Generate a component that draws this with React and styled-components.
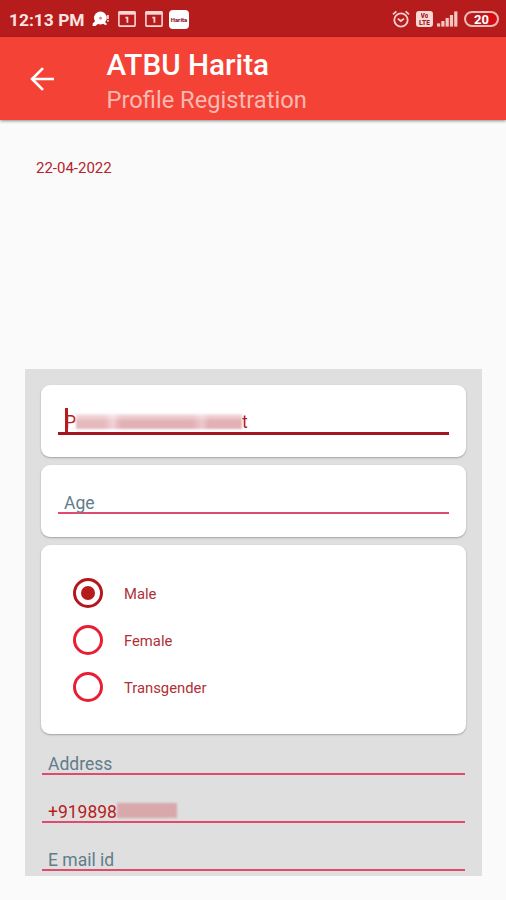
import { useState } from 'react';
import styled, { createGlobalStyle } from 'styled-components';

const GlobalStyle = createGlobalStyle`
  * {
    box-sizing: border-box;
  }
  body {
    margin: 0;
    background: #fafafa;
    font-family: Roboto, 'Liberation Sans', sans-serif;
  }
`;

const AlarmIcon = () => (
  <svg width="18" height="18" viewBox="0 0 18 18" fill="none" stroke="#f6cfcb" strokeWidth="1.8">
    <circle cx="9" cy="10" r="6.7" />
    <path d="M1 4.4L4.4 1.4M17 4.4L13.6 1.4" />
    <path d="M5.8 8.6L8.8 11L12 8.6" />
  </svg>
);

const SignalIcon = () => (
  <svg width="21" height="16" viewBox="0 0 21 16" fill="#f3c6c2">
    <rect x="0" y="12.4" width="3.2" height="3.2" />
    <rect x="4.3" y="10" width="3.2" height="5.6" />
    <rect x="8.6" y="7" width="3.2" height="8.6" />
    <rect x="12.9" y="4" width="3.2" height="11.6" />
    <rect x="17.2" y="0.4" width="3.2" height="15.2" />
  </svg>
);

const CallIcon = () => (
  <svg width="18" height="16" viewBox="0 0 18 16" fill="#fff">
    <circle cx="8.4" cy="7" r="6.4" />
    <path d="M4 9.5L0.6 12.4V15H3.4L7 12Z" />
    <path d="M12 10l3.2 3.2-2 .8-3-2z" />
    <rect x="15.2" y="4" width="1.5" height="4" />
    <rect x="15.2" y="9" width="1.5" height="1.6" />
    <circle cx="8.6" cy="7.2" r="1.4" fill="#d9837f" />
  </svg>
);

const CalendarIcon = () => (
  <svg width="18" height="16" viewBox="0 0 18 16" fill="none">
    <rect x="0.9" y="0.9" width="16.2" height="14.2" rx="0.8" stroke="#f8d5d2" strokeWidth="1.6" />
    <rect x="0.5" y="0.5" width="17" height="3.2" fill="#f8d5d2" />
    <path d="M7.4 6.6H9.4V11.8" stroke="#f8d5d2" strokeWidth="1.8" />
  </svg>
);

const BackIcon = () => (
  <svg width="24" height="24" viewBox="0 0 24 24" fill="none" stroke="#fff" strokeWidth="2.7">
    <path d="M24 12H2.2M13 1.1L2.1 12L13 22.9" />
  </svg>
);

const StatusBar = styled.div`
  display: flex;
  align-items: center;
  justify-content: space-between;
  height: 37px;
  padding: 1px 7px 0 9px;
  background: #b71c1c;
`;

const StatusGroup = styled.div`
  display: flex;
  align-items: center;
  gap: ${(props) => props.$gap}px;
`;

const Clock = styled.span`
  width: 75px;
  margin-right: -1px;
  padding-top: 1px;
  color: #fbe3e1;
  font-size: 17.4px;
  font-weight: 700;
  white-space: nowrap;
`;

const AppBadge = styled.span`
  display: flex;
  align-items: center;
  justify-content: center;
  width: 20px;
  height: 19px;
  margin-left: -2px;
  border-radius: 4px;
  background: #fff;
  color: #8d2430;
  font-size: 6px;
  font-weight: 900;
`;

const VolteBadge = styled.span`
  display: flex;
  flex-direction: column;
  align-items: center;
  justify-content: center;
  gap: 1px;
  width: 17px;
  height: 16px;
  margin-left: 2px;
  border-radius: 3px;
  background: #f8d9d6;
  color: #a81d1d;
  font-size: 6.6px;
  font-weight: 900;
  line-height: 6px;
`;

const VolteLine = styled.span`
  display: block;
  height: 6px;
  overflow: hidden;
`;

const Battery = styled.span`
  width: 35px;
  height: 16px;
  margin-left: 2px;
  border: 2px solid #f0b9b5;
  border-radius: 8px;
  background: linear-gradient(90deg, #b71c1c 64%, #d50b12 64%);
  color: #fff;
  font-size: 13px;
  font-weight: 700;
  line-height: 13px;
  text-align: center;
`;

const Toolbar = styled.header`
  display: flex;
  align-items: center;
  gap: 52.5px;
  height: 83px;
  padding-left: 30px;
  background: #f44336;
  box-shadow: 0 1px 3px rgba(0, 0, 0, 0.45);
`;

const Titles = styled.div`
  padding-top: 7px;
`;

const Title = styled.h1`
  margin: 0;
  color: #fff;
  font-size: 29.7px;
  font-weight: 500;
  line-height: 36px;
`;

const Subtitle = styled.div`
  color: #fbb9b2;
  font-size: 23.7px;
  line-height: 35px;
`;

const DateText = styled.div`
  padding: 40px 0 0 36px;
  height: 249px;
  color: #b3262b;
  font-size: 15px;
  line-height: 17px;
`;

const Panel = styled.main`
  display: flex;
  flex-direction: column;
  gap: 8px;
  width: 457px;
  height: 507px;
  margin-left: 25px;
  padding: 16px 16px 0;
  background: #dfdfdf;
`;

const Card = styled.section`
  height: ${(props) => props.$height}px;
  padding: ${(props) => props.$padding};
  border-radius: 9px;
  background: #fff;
  box-shadow: 0 1px 2px rgba(0, 0, 0, 0.28);
`;

const Field = styled.div`
  display: flex;
  align-items: flex-end;
  height: ${(props) => props.$height || 34}px;
  padding: 0 6px;
  border-bottom: ${(props) => (props.$focused ? '3px solid #a31521' : '2px solid #e04a6c')};
  color: ${(props) => (props.$filled ? '#b71c1c' : '#607d8b')};
  font-size: 17.5px;
  line-height: ${(props) => (props.$focused ? 20 : 18)}px;
`;

const Caret = styled.span`
  width: 3px;
  height: 24px;
  margin: 0 -3px 0 1px;
  background: #b71c1c;
`;

const Redacted = styled.span`
  width: ${(props) => props.$width}px;
  height: 15px;
  margin-bottom: ${(props) => props.$lift || 3}px;
  background: ${(props) => props.$fill};
  filter: blur(1px);
`;

const PlainFields = styled.div`
  padding: 0 1px;
`;

const RadioList = styled.div`
  display: flex;
  flex-direction: column;
  gap: 17.2px;
`;

const RadioRow = styled.label`
  display: flex;
  align-items: center;
  gap: 21px;
  height: 30px;
  color: #b03036;
  font-size: 14.8px;
  line-height: 18px;
  cursor: pointer;
`;

const RadioLabel = styled.span`
  padding-top: 2px;
`;

const RadioCircle = styled.span`
  display: flex;
  align-items: center;
  justify-content: center;
  width: 30px;
  height: 30px;
  border: 3px solid ${(props) => (props.$checked ? '#b3161c' : '#e81e35')};
  border-radius: 50%;

  &::after {
    content: '';
    width: 14px;
    height: 14px;
    border-radius: 50%;
    background: ${(props) => (props.$checked ? '#b71c1c' : 'transparent')};
  }
`;

const nameFill = `
  linear-gradient(180deg, rgba(255, 255, 255, 0.6), rgba(255, 255, 255, 0) 50%),
  linear-gradient(90deg, #e6b9bd 0 17%, #f0d3d6 22%, #e2b1b6 27% 70%, #ecc8cb 76%, #e2b0b5 80% 100%)
`;

const genders = ['Male', 'Female', 'Transgender'];

const App = () => {
  const [gender, setGender] = useState('Male');

  return (
    <>
      <GlobalStyle />
      <StatusBar>
        <StatusGroup $gap={8.5}>
          <Clock>12:13 PM</Clock>
          <CallIcon />
          <CalendarIcon />
          <CalendarIcon />
          <AppBadge>Harita</AppBadge>
        </StatusGroup>
        <StatusGroup $gap={4}>
          <AlarmIcon />
          <VolteBadge>
            <VolteLine>Vo</VolteLine>
            <VolteLine>LTE</VolteLine>
          </VolteBadge>
          <SignalIcon />
          <Battery>20</Battery>
        </StatusGroup>
      </StatusBar>
      <Toolbar>
        <BackIcon />
        <Titles>
          <Title>ATBU Harita</Title>
          <Subtitle>Profile Registration</Subtitle>
        </Titles>
      </Toolbar>
      <DateText>22-04-2022</DateText>
      <Panel>
        <Card $height={72} $padding="16px 17px 0">
          <Field $focused $filled $height={34}>
            <Caret />
            P
            <Redacted $width={166} $fill={nameFill} />
            t
          </Field>
        </Card>
        <Card $height={72} $padding="15px 17px 0">
          <Field>Age</Field>
        </Card>
        <Card $height={189} $padding="33px 32px 0">
          <RadioList>
            {genders.map((item) => (
              <RadioRow key={item} onClick={() => setGender(item)}>
                <RadioCircle $checked={gender === item} />
                <RadioLabel>{item}</RadioLabel>
              </RadioRow>
            ))}
          </RadioList>
        </Card>
        <PlainFields>
          <Field $height={33}>Address</Field>
          <Field $height={48} $filled>
            +919898
            <Redacted $width={60} $fill="#d9a8ab" />
          </Field>
          <Field $height={48}>E mail id</Field>
        </PlainFields>
      </Panel>
    </>
  );
};

export default App;
